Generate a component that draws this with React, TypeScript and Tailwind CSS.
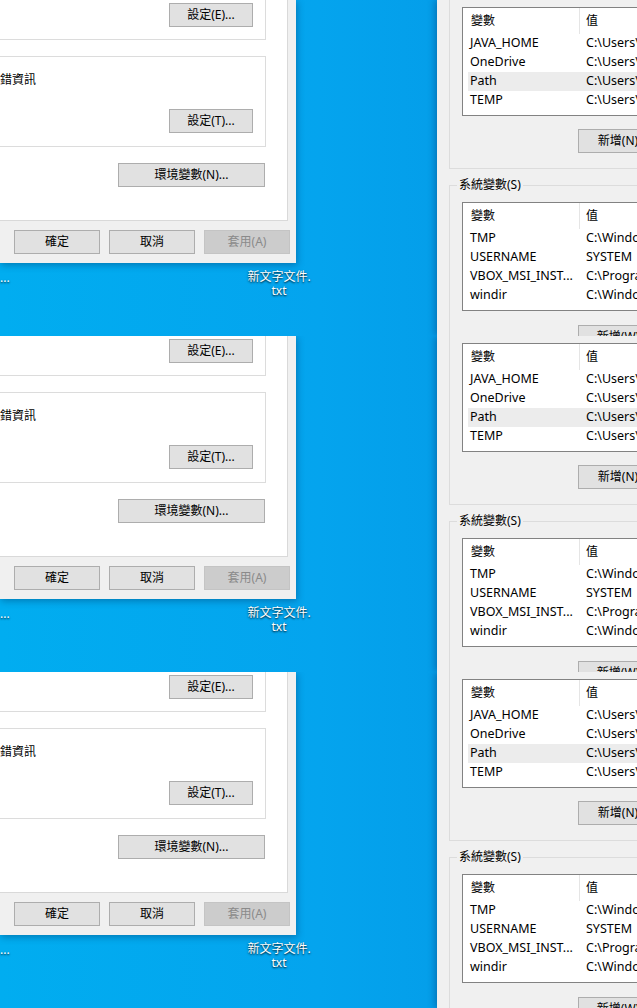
import React, { JSX } from "react";

const font = "font-['Noto_Sans','Noto_Sans_CJK_TC',sans-serif]";

type BtnProps = { children: React.ReactNode; className?: string; disabled?: boolean };

const Btn = ({ children, className = "", disabled = false }: BtnProps): JSX.Element => (
    <div
        className={`flex h-[24px] items-center justify-center border text-[12px] leading-none ${
            disabled ? "border-[#c4c4c4] bg-[#cccccc] text-[#8a8a8a]" : "border-[#adadad] bg-[#e1e1e1] text-black"
        } ${className}`}
    >
        {children}
    </div>
);

type Row = { name: string; value: string };

const userVars: Row[] = [
    { name: "JAVA_HOME", value: "C:\\Users\\admin\\jdk" },
    { name: "OneDrive", value: "C:\\Users\\admin\\OneDrive" },
    { name: "Path", value: "C:\\Users\\admin\\AppData" },
    { name: "TEMP", value: "C:\\Users\\admin\\AppData\\Local\\Temp" },
];

const systemVars: Row[] = [
    { name: "TMP", value: "C:\\Windows\\TEMP" },
    { name: "USERNAME", value: "SYSTEM" },
    { name: "VBOX_MSI_INST...", value: "C:\\Program Files\\Oracle" },
    { name: "windir", value: "C:\\Windows" },
];

const ListView = ({ rows, selected }: { rows: Row[]; selected?: string }): JSX.Element => (
    <div className="w-[240px] overflow-hidden border border-[#828282] bg-white pb-[5px] text-[12.5px] text-black">
        <div className="flex h-[26px] text-[12px]">
            <div className="flex w-[117px] shrink-0 items-center border-r border-[#e5e5e5] pl-[8px]">變數</div>
            <div className="flex items-center pl-[6px]">值</div>
        </div>
        {rows.map((r) => (
            <div
                key={r.name}
                className={`ml-[5px] flex h-[19px] items-center whitespace-nowrap ${
                    r.name === selected ? "bg-[#ececec]" : ""
                }`}
            >
                <div className="w-[111px] shrink-0 overflow-hidden pl-[2px]">{r.name}</div>
                <div className="shrink-0 pl-[7px]">{r.value}</div>
            </div>
        ))}
    </div>
);

const LeftDialog = (): JSX.Element => (
    <div className="absolute left-0 top-0 w-[296px] bg-[#f0f0f0] shadow-[1px_2px_7px_rgba(0,30,70,0.35)]">
        <div className="h-[221px] w-[288px] border-b border-r border-[#d9d9d9] bg-white">
            <div className="flex w-[266px] justify-end border-b border-r border-[#dcdcdc] pb-[12px] pr-[12px] pt-[3px]">
                <Btn className="w-[84px]">設定(E)...</Btn>
            </div>
            <div className="mt-[16px] flex h-[91px] w-[266px] flex-col border-b border-r border-t border-[#dcdcdc] pr-[12px] pt-[15px]">
                <div className="text-[12px] leading-[16px] text-black">錯資訊</div>
                <div className="mt-[21px] flex justify-end">
                    <Btn className="w-[84px]">設定(T)...</Btn>
                </div>
            </div>
            <Btn className="ml-[118px] mt-[16px] w-[147px]">環境變數(N)...</Btn>
        </div>
        <div className="flex gap-[9px] pb-[9px] pl-[14px] pt-[9px]">
            <Btn className="w-[86px]">確定</Btn>
            <Btn className="w-[86px]">取消</Btn>
            <Btn className="w-[86px]" disabled>
                套用(A)
            </Btn>
        </div>
    </div>
);

const RightDialog = (): JSX.Element => (
    <div className="absolute left-[437px] top-0 h-[336px] w-[260px] bg-[#f0f0f0] shadow-[-2px_0_7px_rgba(0,30,80,0.35)]">
        <div className="ml-[12px] border-b border-l border-[#dcdcdc] pb-[15px] pl-[12px] pt-[7px]">
            <ListView rows={userVars} selected="Path" />
            <Btn className="ml-[116px] mt-[13px] w-[80px]">新增(N)</Btn>
        </div>
        <fieldset className="ml-[12px] mt-[8px] border-l border-t border-[#dcdcdc]">
            <legend className="ml-[7px] px-[2px] text-[12px] leading-[16px] text-black">系統變數(S)</legend>
            <div className="pl-[12px] pt-[9px]">
                <ListView rows={systemVars} />
                <Btn className="ml-[116px] mt-[14px] w-[80px]">新增(W)</Btn>
            </div>
        </fieldset>
    </div>
);

const Strip = (): JSX.Element => (
    <div className="relative h-[336px] overflow-hidden bg-gradient-to-r from-[#01adf0] via-[#04a4ee] to-[#0495e3]">
        <LeftDialog />
        <div className="absolute left-0 top-[271px] text-[12px] leading-[14px] text-white [text-shadow:0_1px_2px_rgba(0,0,0,0.9)]">
            ...
        </div>
        <div className="absolute left-[240px] top-[270px] w-[78px] text-center text-[12px] leading-[14px] text-white [text-shadow:0_1px_2px_rgba(0,0,0,0.9)]">
            新文字文件.
            <br />
            txt
        </div>
        <RightDialog />
    </div>
);

const App: React.FC = (): JSX.Element => {
    return (
        <div className={`h-[1008px] w-[637px] overflow-hidden ${font}`}>
            <Strip />
            <Strip />
            <Strip />
        </div>
    );
};

export default App;
